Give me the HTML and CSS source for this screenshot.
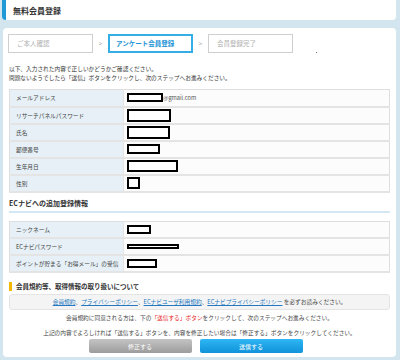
FILE: index.html
```html
<!DOCTYPE html>
<html lang="ja">

<head>
    <meta charset="UTF-8">
    <meta name="viewport" content="width=device-width, initial-scale=1.0">
    <title>無料会員登録</title>
    <link rel="stylesheet" href="styles.css">
</head>

<body>
    <div class="page-head">
        <h1>無料会員登録</h1>
    </div>

    <div class="card">
        <div class="steps">
            <div class="step">ご本人確認</div>
            <div class="arrow">&gt;</div>
            <div class="step current">アンケート会員登録</div>
            <div class="arrow">&gt;</div>
            <div class="step">会員登録完了</div>
            <span class="dot"></span>
        </div>

        <p class="intro">以下、入力された内容で正しいかどうかご確認ください。<br>問題ないようでしたら「送信」ボタンをクリックし、次のステップへお進みください。</p>

        <table class="info">
            <tr>
                <th>メールアドレス</th>
                <td><span class="mask" style="width: 36px; height: 9px;"></span><span class="mail">@gmail.com</span></td>
            </tr>
            <tr>
                <th>リサーチパネルパスワード</th>
                <td><span class="mask" style="width: 44px; height: 13px;"></span></td>
            </tr>
            <tr>
                <th>氏名</th>
                <td><span class="mask" style="width: 43px; height: 13px;"></span></td>
            </tr>
            <tr>
                <th>郵便番号</th>
                <td><span class="mask" style="width: 33px; height: 10px;"></span></td>
            </tr>
            <tr>
                <th>生年月日</th>
                <td><span class="mask" style="width: 51px; height: 12px;"></span></td>
            </tr>
            <tr>
                <th>性別</th>
                <td><span class="mask" style="width: 13px; height: 12px;"></span></td>
            </tr>
        </table>

        <h2 class="section-title">ECナビへの追加登録情報</h2>

        <table class="info">
            <tr>
                <th>ニックネーム</th>
                <td><span class="mask" style="width: 24px; height: 9px;"></span></td>
            </tr>
            <tr>
                <th>ECナビパスワード</th>
                <td><span class="mask" style="width: 52px; height: 5px;"></span></td>
            </tr>
            <tr>
                <th>ポイントが貯まる「お得メール」の受信</th>
                <td><span class="mask" style="width: 30px; height: 9px;"></span></td>
            </tr>
        </table>

        <h3 class="notice-title">会員規約等、取得情報の取り扱いについて</h3>

        <div class="notice-box">
            <a href="#">会員規約</a>、<a href="#">プライバシーポリシー</a>、<a href="#">ECナビユーザ利用規約</a>、<a href="#">ECナビプライバシーポリシー</a> を必ずお読みください。
        </div>

        <p class="note">会員規約に同意される方は、下の<span class="red">「送信する」ボタン</span>をクリックして、次のステップへお進みください。</p>
        <p class="note">上記の内容でよろしければ「送信する」ボタンを、内容を修正したい場合は「修正する」ボタンをクリックしてください。</p>

        <div class="buttons">
            <button class="btn back">修正する</button>
            <button class="btn send">送信する</button>
        </div>
    </div>
</body>

</html>
```

FILE: styles.css
```css
body {
    margin: 0;
    background-color: #d3e6ef;
    font-family: "Noto Sans CJK JP", sans-serif;
    color: #333;
    font-size: 5.7px;
}

.page-head {
    margin: -4px 4px 0 2px;
    height: 24px;
    background-color: #fff;
    border-left: 4px solid #1f9ad6;
    border-radius: 4px;
    box-sizing: border-box;
    display: flex;
    align-items: center;
    padding: 4px 0 0 7px;
}

.page-head h1 {
    margin: 0;
    font-size: 8px;
    font-weight: bold;
    color: #333;
}

.card {
    margin: 8px 4px 0 3px;
    height: 329px;
    background-color: #fff;
    border-radius: 4px;
    padding: 6px 6px 0 6px;
    box-sizing: border-box;
}

.steps {
    display: flex;
    align-items: center;
    height: 19px;
    margin-left: -1px;
}

.step {
    width: 85px;
    height: 19px;
    box-sizing: border-box;
    border: 1px solid #cfcfcf;
    padding-left: 8px;
    font-size: 6.5px;
    line-height: 17px;
    color: #b0b0b0;
}

.step.current {
    border: 2px solid #35aee6;
    padding-left: 6px;
    line-height: 15px;
    color: #1d93d6;
    font-weight: bold;
}

.arrow {
    width: 15px;
    text-align: center;
    font-size: 6px;
    color: #999;
}

.dot {
    width: 1px;
    height: 1px;
    background-color: #777;
    align-self: flex-end;
    margin-left: 23px;
}

.intro {
    margin: 11px 0 0 0;
    line-height: 9px;
}

.info {
    width: 100%;
    margin-top: 7px;
    border-collapse: collapse;
    border: 1px solid #dedede;
}

.info th,
.info td {
    height: 17px;
    padding: 0;
    border-bottom: 2px solid #e4e4e4;
    box-sizing: border-box;
}

.info th {
    width: 114px;
    background-color: #e6f0f6;
    text-align: left;
    font-weight: normal;
    padding-left: 6px;
    color: #444;
    border-right: 1px solid #e4e4e4;
}

.info td {
    background-color: #fcfcfc;
    padding-left: 3px;
    line-height: 0;
}

.mask {
    display: inline-block;
    box-sizing: border-box;
    border: 2px solid #000;
    background-color: #fff;
    vertical-align: middle;
}

.mail {
    display: inline-block;
    vertical-align: middle;
    line-height: 9px;
    color: #555;
}

.section-title {
    margin: 5px 0 0 0;
    padding-bottom: 3px;
    font-size: 7px;
    font-weight: bold;
    color: #333;
    border-bottom: 2px solid #d3e8f3;
}

.section-title + .info {
    margin-top: 8px;
}

.notice-title {
    margin: 9px 0 0 0;
    padding-left: 4px;
    border-left: 3px solid #f5b800;
    font-size: 6.5px;
    font-weight: bold;
    line-height: 9px;
    color: #333;
}

.notice-box {
    margin-top: 3px;
    height: 16px;
    line-height: 14px;
    box-sizing: border-box;
    background-color: #f4f4f4;
    border: 1px solid #e4e4e4;
    border-radius: 3px;
    text-align: center;
    color: #444;
}

.notice-box a {
    color: #2578c0;
}

.note {
    margin: 0;
    line-height: 15px;
    text-align: center;
    color: #444;
}

.note:first-of-type {
    margin-top: 2px;
}

.red {
    color: #e6201a;
}

.buttons {
    display: flex;
    justify-content: center;
    gap: 8px;
    margin-top: -1px;
    margin-right: 8px;
}

.btn {
    width: 103px;
    height: 14px;
    border: none;
    border-radius: 2px;
    color: #fff;
    font-family: "Noto Sans CJK JP", sans-serif;
    font-size: 6px;
    padding: 0;
    cursor: pointer;
}

.btn.back {
    background: linear-gradient(#c4c4c4, #9c9c9c);
}

.btn.send {
    background: linear-gradient(#2fb6f4, #0f92da);
}
```
